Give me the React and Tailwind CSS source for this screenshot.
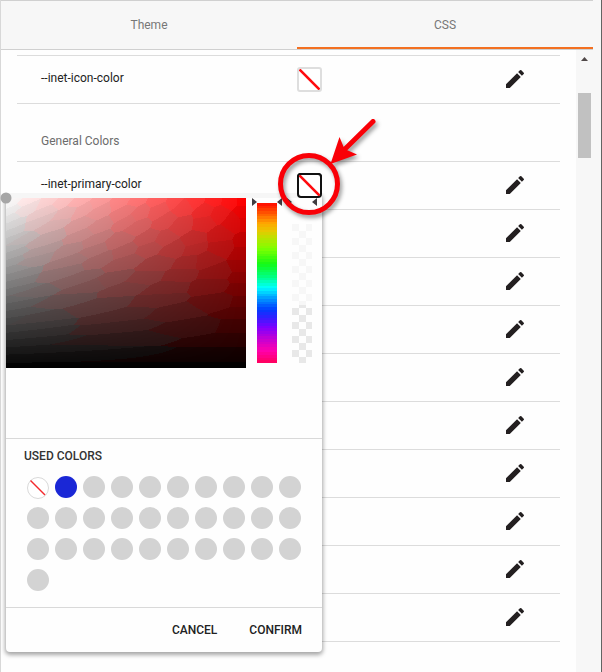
import { useEffect, useRef } from "react";

const ICON = "M3 17.25V21h3.75L17.81 9.94l-3.75-3.75L3 17.25zM20.71 7.04a1 1 0 0 0 0-1.41l-2.34-2.34a1 1 0 0 0-1.41 0l-1.83 1.83 3.75 3.75 1.83-1.83z";

function Pencil() {
  return (
    <svg className="mb-0.5 size-6 shrink-0 text-[#231f20]" viewBox="0 0 24 24" fill="currentColor">
      <path d={ICON} />
    </svg>
  );
}

function Swatch({ active }) {
  return (
    <div
      className={
        active
          ? "size-[25px] shrink-0 rounded-[4px] border-2 border-[#111] bg-white"
          : "size-[25px] shrink-0 rounded-[3px] border-2 border-[#dedede] bg-white"
      }
    >
      <svg className="size-full" viewBox="0 0 21 21">
        <path d="M0.5 0.5L20.5 20.5" stroke="#ff0a0e" strokeWidth="2.6" />
      </svg>
    </div>
  );
}

function Row({ label, swatch, active }) {
  return (
    <div className="flex h-12 shrink-0 items-center border-b border-[#dcdcdc] pl-6 pr-[33px]">
      <span className="w-64 shrink-0 pb-[3px] text-[12px] leading-4 text-[#222]">{label}</span>
      <div className="flex-1">{swatch && <Swatch active={active} />}</div>
      <Pencil />
    </div>
  );
}

// Saturation / value field, stepped towards the nearest colour of a limited palette.
function ColorField() {
  const ref = useRef(null);
  useEffect(() => {
    const ctx = ref.current.getContext("2d");
    const w = 240;
    const h = 170;
    const seeds = [[0, 0]];
    const noise = (a, b) => {
      const n = Math.sin(a * 127.1 + b * 311.7) * 43758.5453;
      return n - Math.floor(n) - 0.5;
    };
    for (let g = 14; g <= 255; g += 11) {
      seeds.push([g, g]);
    }
    for (let i = 1; i < 14; i++) {
      for (let j = 0; j < i; j++) {
        const r = Math.min(255, i * 19.6 + noise(i, j) * 13);
        const g = j === 0 ? 0 : j * 19.6 + (i % 2 ? -5 : 3) + noise(j + 40, i) * 10;
        seeds.push([r, Math.max(0, Math.min(r, g))]);
      }
    }
    const img = ctx.createImageData(w, h);
    for (let y = 0; y < h; y++) {
      for (let x = 0; x < w; x++) {
        const r = 255 * (1 - y / (h - 1));
        const g = r * (1 - x / (w - 1));
        let best = Infinity;
        let pick = seeds[0];
        for (const s of seeds) {
          const d = (s[0] - r) ** 2 + 2 * (s[1] - g) ** 2;
          if (d < best) {
            best = d;
            pick = s;
          }
        }
        const p = (y * w + x) * 4;
        img.data[p] = pick[0] * 0.6 + r * 0.4;
        img.data[p + 1] = pick[1] * 0.6 + g * 0.4;
        img.data[p + 2] = pick[1] * 0.6 + g * 0.4;
        img.data[p + 3] = 255;
      }
    }
    ctx.putImageData(img, 0, 0);
  }, []);
  return <canvas ref={ref} width="240" height="170" className="block h-[170px] w-[240px] shrink-0" />;
}

const HUE_STOPS = [
  [0, 255, 20, 0],
  [0.06, 255, 90, 0],
  [0.12, 255, 165, 0],
  [0.17, 232, 200, 0],
  [0.21, 190, 225, 0],
  [0.28, 128, 255, 0],
  [0.38, 20, 250, 20],
  [0.46, 0, 255, 130],
  [0.53, 0, 255, 255],
  [0.6, 0, 150, 255],
  [0.67, 0, 60, 255],
  [0.72, 50, 30, 255],
  [0.78, 125, 0, 255],
  [0.85, 190, 0, 215],
  [0.93, 255, 0, 175],
  [1, 255, 0, 100],
];

const HUES = Array.from({ length: 60 }, (_, i) => {
  const t = i / 59;
  const k = Math.max(1, HUE_STOPS.findIndex((s) => s[0] >= t));
  const a = HUE_STOPS[k - 1];
  const b = HUE_STOPS[k];
  const f = (t - a[0]) / (b[0] - a[0]);
  return `rgb(${[1, 2, 3].map((c) => Math.round(a[c] + (b[c] - a[c]) * f)).join(",")})`;
});

function HueBar() {
  return (
    <svg className="ml-[11px] mt-[5px] h-40 w-5 shrink-0" viewBox="0 0 20 160" shapeRendering="crispEdges">
      {HUES.map((fill, i) => (
        <rect key={i} x="0" y={(i * 160) / 60} width="20" height="3" fill={fill} />
      ))}
    </svg>
  );
}

const CELLS = Array.from({ length: 23 * 3 }, (_, i) => ({ row: Math.floor(i / 3), col: i % 3 })).filter(
  ({ row, col }) => row > 2 && (row + col) % 2 === 1
);

function AlphaBar() {
  return (
    <svg className="ml-[15px] mt-[5px] h-40 w-5 shrink-0" viewBox="0 0 20 160" shapeRendering="crispEdges">
      {CELLS.map(({ row, col }) => (
        <rect
          key={`${row}-${col}`}
          x={col * 7}
          y={row * 7}
          width={col === 2 ? 6 : 7}
          height="7"
          fill={row > 14 ? "#e8e8e8" : "#f7f7f7"}
        />
      ))}
      <rect x="7" y="102" width="7" height="3" fill="#e8e8e8" />
    </svg>
  );
}

const USED = Array.from({ length: 31 }, (_, i) => i);

function UsedColor({ index }) {
  if (index === 0) {
    return (
      <svg className="mt-px size-[22px]" viewBox="0 0 22 22">
        <circle cx="11" cy="11" r="10.5" fill="#fff" stroke="#d9d9d9" />
        <path d="M3.5 3.5L18 18" stroke="#f4282c" strokeWidth="1.4" />
      </svg>
    );
  }
  return (
    <span
      className={index === 1 ? "block size-[22px] rounded-full bg-[#1a27d6]" : "block size-[22px] rounded-full bg-[#d3d3d3]"}
    />
  );
}

function Picker() {
  return (
    <div className="absolute left-[6px] top-[193px] flex h-[459px] w-[316px] flex-col rounded-[4px] bg-[#fefefe] shadow-[0_2px_4px_1px_rgba(0,0,0,0.35)] [clip-path:inset(0_-8px_-10px_-6px)]">
      <div className="h-[5px] shrink-0 bg-[#f6f6f6]" />
      <div className="flex h-[241px] shrink-0 border-b border-[#d9d9d9]">
        <ColorField />
        <HueBar />
        <AlphaBar />
      </div>
      <div className="h-[168px] shrink-0 pl-[18px] pt-[9px]">
        <h2 className="text-[12px] font-medium leading-4 text-[#333]">USED COLORS</h2>
        <div className="ml-[3px] mt-3 grid w-[274px] auto-rows-[31px] grid-cols-[repeat(10,28px)]">
          {USED.map((index) => (
            <UsedColor key={index} index={index} />
          ))}
        </div>
      </div>
      <div className="flex flex-1 items-center justify-end gap-8 border-t border-[#d9d9d9] pr-5 text-[12px] font-medium leading-4 text-[#222]">
        <button>CANCEL</button>
        <button>CONFIRM</button>
      </div>
    </div>
  );
}

function PickerHandles() {
  return (
    <svg className="absolute left-0 top-[190px] h-5 w-[330px]" viewBox="0 190 330 20">
      <circle cx="6" cy="198" r="5.5" fill="#a6a6a6" />
      <path d="M252 198v8l5-4zM282 198v8l-5-4zM287 198v8l5-4zM317 198v8l-5-4z" fill="#403c40" />
    </svg>
  );
}

function Callout() {
  return (
    <svg
      className="absolute left-[270px] top-[110px] h-[120px] w-[120px] drop-shadow-[2px_3px_2px_rgba(0,0,0,0.4)]"
      viewBox="270 110 120 120"
    >
      <circle cx="309" cy="184" r="28.5" fill="none" stroke="#f90007" strokeWidth="5" />
      <path d="M373 121.5L344 150" stroke="#f90007" strokeWidth="5" strokeLinecap="round" />
      <path d="M330.500 164L339.500 137L344.500 149L357 154.500Z" fill="#f90007" />
    </svg>
  );
}

export default function App() {
  return (
    <div className="relative flex h-[672px] w-[602px] overflow-hidden border-r border-[#636363] bg-[#f7f7f7] font-['Roboto','Liberation_Sans',sans-serif]">
      <div className="flex w-[593px] shrink-0 flex-col border-l border-[#d8d8d8]">
        <nav className="flex h-[50px] shrink-0 border-y border-[#d0d0d0] text-[12px] text-[#777]">
          <div className="flex w-[296px] items-center justify-center">Theme</div>
          <div className="flex flex-1 items-center justify-center border-b-2 border-[#f37021] pt-0.5">CSS</div>
        </nav>
        <div className="flex flex-1">
          <main className="flex w-[575px] flex-col bg-[#fefefe] pl-4 pr-4 pt-[5px]">
            <div className="flex flex-col border-t border-[#dcdcdc]">
              <Row label="--inet-icon-color" swatch />
              <div className="h-[58px] border-b border-[#dcdcdc] pl-6 pt-[29px] text-[12px] leading-4 text-[#6c6c6c]">
                General Colors
              </div>
              <Row label="--inet-primary-color" swatch active />
              {Array.from({ length: 9 }, (_, i) => (
                <Row key={i} />
              ))}
            </div>
          </main>
          <div className="flex flex-1 flex-col items-center">
            <svg className="mt-[7px] h-[4px] w-[7px]" viewBox="0 0 7 4">
              <path d="M3.500 0L7 4H0z" fill="#504848" />
            </svg>
            <div className="mt-8 h-[65px] w-[13px] bg-[#c1c1c1]" />
          </div>
        </div>
      </div>
      <Picker />
      <PickerHandles />
      <div className="absolute left-[297px] top-[173px]">
        <Swatch active />
      </div>
      <Callout />
    </div>
  );
}
